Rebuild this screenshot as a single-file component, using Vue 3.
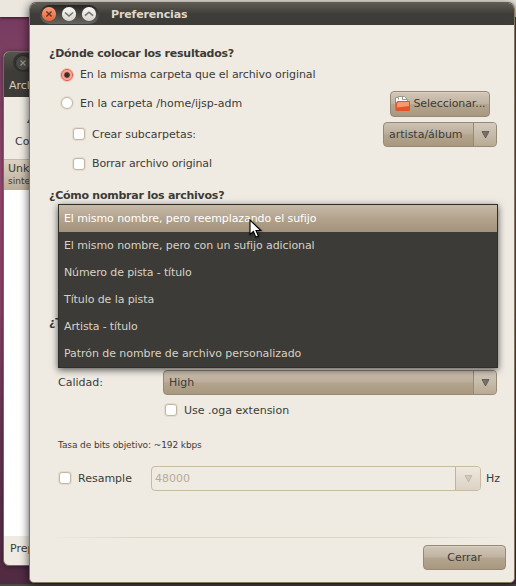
<script setup>
const names = [
  { text: 'El mismo nombre, pero reemplazando el sufijo', fit: 'snug' },
  { text: 'El mismo nombre, pero con un sufijo adicional', fit: 'snug' },
  { text: 'Número de pista - título', fit: 'tight' },
  { text: 'Título de la pista', fit: 'snug' },
  { text: 'Artista - título', fit: 'tight' },
  { text: 'Patrón de nombre de archivo personalizado', fit: 'loose' },
]
const active = 0
</script>

<template>
  <div class="desktop">
    <div class="top-panel"></div>
    <div class="bottom-panel"></div>

    <section class="back-window">
      <header class="back-head">
        <span class="back-close">
          <svg width="16" height="16" viewBox="0 0 16 16"><circle cx="8" cy="8" r="7.5" fill="#4b4944" stroke="#2f2d2a" /><path d="M5.5 5.5l5 5M10.5 5.5l-5 5" stroke="#98938a" stroke-width="1.2" /></svg>
        </span>
        <span class="back-menu">Arch</span>
      </header>
      <div class="back-tools">
        <span class="back-icon"></span>
        <span>Co</span>
      </div>
      <div class="back-row">
        <span>Unk</span>
        <small>sinte</small>
      </div>
      <div class="back-list"></div>
      <footer class="back-status">Prep</footer>
    </section>

    <section class="dialog">
      <header class="titlebar">
        <div class="controls">
          <svg width="58" height="18" viewBox="0 0 58 18">
            <defs>
              <linearGradient id="red" x1="0" y1="0" x2="0" y2="1"><stop offset="0" stop-color="#f9a07c" /><stop offset="1" stop-color="#ec6236" /></linearGradient>
              <linearGradient id="pale" x1="0" y1="0" x2="0" y2="1"><stop offset="0" stop-color="#fbfaf8" /><stop offset="1" stop-color="#d6d3cb" /></linearGradient>
            </defs>
            <circle cx="9" cy="9" r="7.1" fill="url(#red)" />
            <path d="M6.4 6.4l5.2 5.2M11.600 6.400l-5.200 5.200" stroke="#5b3a2c" stroke-width="1.400" />
            <circle cx="29" cy="9" r="7.1" fill="url(#pale)" />
            <path d="M25 7.500l4 3.500l4-3.500" fill="none" stroke="#77746e" stroke-width="1.600" />
            <circle cx="49" cy="9" r="7.1" fill="url(#pale)" />
            <path d="M45 10.700l4-3.500l4 3.500" fill="none" stroke="#77746e" stroke-width="1.600" />
          </svg>
        </div>
        <h1>Preferencias</h1>
      </header>

      <div class="content">
        <h2>¿Dónde colocar los resultados?</h2>
        <div class="row same">
          <span class="radio on"></span><span class="snug">En la misma carpeta que el archivo original</span>
        </div>
        <div class="row folder">
          <span class="radio"></span><span class="grow">En la carpeta /home/ijsp-adm</span>
          <button class="button choose">
            <svg width="17" height="16" viewBox="0 0 17 16">
              <path d="M1.500 13.500V1.500h2.500V.5H10.500l3 3V12z" fill="#fff" stroke="#9b9893" />
              <path d="M4.500 1.500v2M8.500 1v2.500H13" fill="none" stroke="#97948f" />
              <path d="M3.500 5.500h12v9H2.500V6.500z" fill="#ea5424" stroke="#d8562e" />
              <path d="M3 7.500L4.500 6H15v4L3 11.500z" fill="#f59a70" />
              <path d="M1.500 3v11.500" fill="none" stroke="#8f8a84" />
            </svg>
            <span>Seleccionar...</span>
          </button>
        </div>
        <div class="row sub">
          <span class="check"></span><span class="grow sub-label">Crear subcarpetas:</span>
          <div class="combo pattern"><span class="value">artista/álbum</span><span class="arrow"><svg width="9" height="9" viewBox="0 0 9 9"><path d="M1 1.500h7L4.500 8z" /></svg></span></div>
        </div>
        <div class="row remove"><span class="check"></span><span class="tight">Borrar archivo original</span></div>
        <h2 class="names-title">¿Cómo nombrar los archivos?</h2>
        <h2 class="format-title">¿T</h2>
        <div class="row quality">
          <span class="quality-label">Calidad:</span>
          <div class="combo level"><span class="value">High</span><span class="arrow"><svg width="9" height="9" viewBox="0 0 9 9"><path d="M1 1.500h7L4.500 8z" /></svg></span></div>
        </div>
        <div class="row oga"><span class="check"></span><span>Use .oga extension</span></div>
        <p class="bitrate">Tasa de bits objetivo: ~192 kbps</p>
        <div class="row resample">
          <span class="check"></span><span class="resample-label">Resample</span>
          <div class="combo rate"><span class="value">48000</span><span class="arrow"><svg width="9" height="9" viewBox="0 0 9 9"><path d="M1 1.500h7L4.500 8z" /></svg></span></div>
          <span class="unit">Hz</span>
        </div>
        <div class="separator"></div>
        <button class="button close">Cerrar</button>
      </div>
    </section>

    <ul class="menu">
      <li v-for="(name, i) in names" :key="name.text" :class="[name.fit, { active: i === active }]">{{ name.text }}</li>
    </ul>

    <svg class="cursor" width="14" height="20" viewBox="0 0 14 20">
      <path d="M1 1v14.500l3.400-3.100 2.400 5.700 2.600-1.100-2.400-5.500h4.800z" fill="#fff" stroke="#000" stroke-width="1.100" />
    </svg>
  </div>
</template>

<style>
body { margin: 0; overflow: hidden; }
</style>

<style scoped>
* { box-sizing: border-box; }
.desktop {
  position: relative;
  width: 516px;
  height: 586px;
  overflow: hidden;
  background: linear-gradient(#75385f 0, #7d4163 60px, #9c4b72 190px, #8e4468 310px, #6e3856 420px, #502a42 586px);
  font: 11px/15px "DejaVu Sans", sans-serif;
  color: #3c3b37;
}
.snug { letter-spacing: -.09px; }
.tight { letter-spacing: -.13px; }
.loose { letter-spacing: -.06px; }
.top-panel {
  position: absolute;
  inset: 0 0 auto;
  height: 17px;
  background: #ebe7df;
  box-shadow: 0 1px 3px #35152a;
}
.bottom-panel {
  position: absolute;
  inset: auto 0 0;
  height: 2px;
  background: #4b4943;
}
.back-window {
  position: absolute;
  left: 3px;
  top: 51px;
  width: 60px;
  height: 515px;
  display: flex;
  flex-direction: column;
  overflow: hidden;
  border: 1px solid #776957;
  border-radius: 6px;
  background: #efebe3;
  white-space: nowrap;
  box-shadow: 0 1px 5px rgba(20, 5, 15, .5);
}
.back-head {
  height: 45px;
  background: linear-gradient(#56544d, #3d3c38 20px);
  color: #d3cec0;
}
.back-close {
  display: flex;
  height: 19px;
  margin: 1px 0 0 9px;
  width: 50px;
  padding: 2px 0 0 2px;
  border-radius: 10px;
  background: #33322f;
}
.back-menu { display: block; padding: 6px 0 0 5px; }
.back-tools {
  height: 63px;
  padding: 18px 0 0 11px;
  display: flex;
  flex-direction: column;
  border-bottom: 1px solid #c5bca8;
}
.back-icon { width: 3px; height: 4px; margin: 4px 0 11px 13px; background: #54545e; transform: skewX(-30deg); }
.back-row {
  height: 30px;
  padding: 1px 0 0 4px;
  display: flex;
  flex-direction: column;
  background: linear-gradient(#dcd2c3, #bbad98);
}
.back-row small { font-size: 9px; line-height: 11px; }
.back-list { flex: 1; background: #fff; }
.back-status { height: 29px; padding: 5px 0 0 6px; }

.dialog {
  position: absolute;
  left: 29px;
  top: 2px;
  width: 486px;
  height: 581px;
  display: flex;
  flex-direction: column;
  overflow: hidden;
  border: 1px solid #85775f;
  border-top-color: #625b4f;
  border-radius: 7px 7px 5px 5px;
  background: #efebe3;
  box-shadow: 0 2px 10px rgba(0, 0, 0, .7);
}
.titlebar {
  flex: none;
  display: flex;
  align-items: center;
  height: 22px;
  background: linear-gradient(#5d5b53, #3e3d39 11px, #3c3b37);
}
.controls {
  display: flex;
  align-items: center;
  width: 59px;
  height: 19px;
  margin-left: 10px;
  border-radius: 10px;
  background: linear-gradient(#262522, #686660);
}
h1 { margin: 0 0 0 12px; font-size: 11px; line-height: 15px; letter-spacing: -.15px; color: #dfd8c8; }
.content { display: flex; flex-direction: column; height: 557px; padding: 17px 8px 0 19px; }
h2 { height: 22px; margin: 0; font-size: 11px; line-height: 24px; letter-spacing: -.25px; }
.row { display: flex; align-items: center; }
.grow { flex: 1; }
.same { height: 22px; padding-left: 12px; }
.same .snug { padding-bottom: 2px; }
.folder { height: 32px; margin-top: 2px; padding: 0 16px 2px 12px; }
.sub { height: 28px; padding: 0 9px 0 24px; }
.sub-label { letter-spacing: -.04px; }
.remove { height: 29px; margin-top: 1px; padding-left: 24px; }
.names-title { margin-top: 6px; }
.format-title { margin-top: 105px; }
.quality { height: 27px; margin-top: 36px; padding: 0 9px 0 9px; }
.oga { height: 22px; margin-top: 3px; padding-left: 116px; }
.bitrate { height: 20px; margin: 14px 0 10px; padding-left: 9px; font-size: 9px; line-height: 20px; letter-spacing: -.1px; }
.resample { height: 27px; padding-left: 10px; }
.resample .check { margin-bottom: 2px; }
.radio, .check {
  flex: none;
  width: 12px;
  height: 12px;
  margin-right: 7px;
  border: 1px solid #c3b7a4;
  background: #fff;
  box-shadow: 0 0 0 1px #e4dccf;
}
.radio { border-radius: 50%; }
.check { border-radius: 3px; }
.radio.on {
  border-color: #e0523f;
  background: radial-gradient(circle, #3b302c 0 2.300px, #fa8e7a 3.200px, #f7c3b6 5px);
  box-shadow: 0 0 0 1px #ecc4b8;
}
.button {
  display: flex;
  align-items: center;
  justify-content: center;
  height: 26px;
  padding: 0 4px;
  border: 1px solid #968975;
  border-radius: 4px;
  background: linear-gradient(#d1c7b9 0, #c0b3a1 48%, #b4a58f 52%, #a8987f 100%);
  box-shadow: inset 0 1px #d9d0c3;
  color: #3c3b37;
  font: inherit;
}
.choose { width: 100px; margin: 2px 0 0; padding: 0; gap: 2px; white-space: nowrap; letter-spacing: -.08px; }
.choose svg { flex: none; }
.choose span { padding-bottom: 1px; }
.combo {
  display: flex;
  height: 25px;
  overflow: hidden;
  border: 1px solid #968975;
  border-radius: 4px;
  background: linear-gradient(#cdc2b3 0, #bcad99 48%, #b3a48d 52%, #a8987f 100%);
}
.value { flex: 1; padding-left: 5px; line-height: 24px; }
.arrow {
  display: flex;
  align-items: center;
  justify-content: center;
  width: 23px;
  border-left: 1px solid #968975;
  background: linear-gradient(#d5ccbe, #b8aa95);
}
.arrow path { fill: #77736a; stroke: #57544d; stroke-width: .8; }
.pattern { width: 114px; margin-top: 1px; }
.pattern .value { line-height: 23px; }
.quality-label { width: 105px; }
.level { width: 334px; }
.resample-label { width: 73px; }
.rate { width: 330px; border-color: #c8baa3; background: #efebe3; color: #b9aa94; }
.rate .value { padding-left: 3px; line-height: 23px; }
.rate .arrow { width: 25px; border-color: #c0b3a0; background: linear-gradient(#eee8df, #dcd2c5); }
.rate .arrow path { fill: #d2c8b6; stroke: #bfb39e; }
.unit { margin-left: 5px; }
.separator {
  flex: none;
  height: 2px;
  margin-top: 45px;
  background: linear-gradient(90deg, transparent, #dcd5c6 20%, #dcd5c6 80%, transparent) 0 0 / 100% 1px no-repeat;
}
.close { flex: none; align-self: flex-end; width: 83px; height: 25px; margin-top: 6px; }
.menu {
  position: absolute;
  left: 58px;
  top: 204px;
  width: 440px;
  margin: 0;
  padding: 0;
  border: 1px solid #302f2b;
  background: #3c3b37;
  color: #d8d2c4;
  list-style: none;
  box-shadow: 0 2px 7px rgba(0, 0, 0, .65);
}
.menu li { height: 27px; padding-left: 5px; line-height: 28px; }
.menu .active { background: linear-gradient(#c7baa9, #b3a38d 50%, #a4927a); color: #fff; }
.cursor { position: absolute; left: 249px; top: 219px; filter: drop-shadow(1px 1px 1px rgba(0, 0, 0, .4)); }
</style>
